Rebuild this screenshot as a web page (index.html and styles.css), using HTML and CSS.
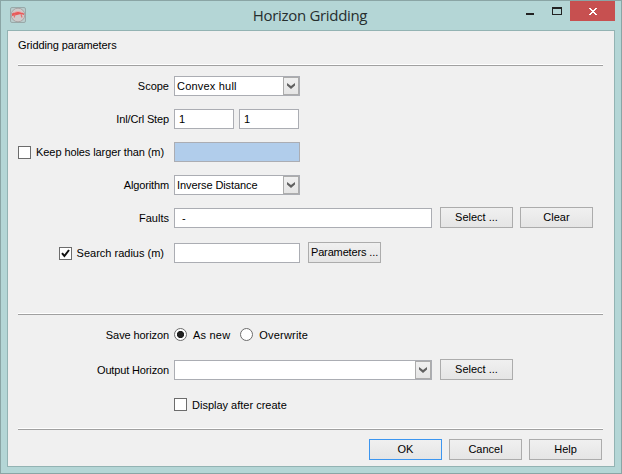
FILE: index.html
```html
<!DOCTYPE html>
<html lang="en">
<head>
<meta charset="utf-8">
<title>Horizon Gridding</title>
<link rel="stylesheet" href="styles.css">
</head>
<body>
<div class="window">
  <header class="titlebar">
    <svg class="app-icon" width="16" height="16" viewBox="0 0 16 16">
      <rect x=".5" y=".5" width="15" height="15" rx="1.5" fill="#b9cccc" stroke="#98a9a9"/>
      <circle cx="8" cy="8" r="6.8" fill="#cfcaca" stroke="#a39b9b" stroke-width=".8"/>
      <path d="M2 6.5Q8 2.5 14 6.5V8L11 7L7 8L2 9Z" fill="#e85a5a"/>
      <path d="M5 7L4.2 10.5M11 7L12 10.5" fill="none" stroke="#e87070" stroke-width="1.2"/>
      <path d="M4 5.5Q8 3.2 12 5.5" fill="none" stroke="#efb0b0" stroke-width=".8"/>
    </svg>
    <h1 class="title">Horizon Gridding</h1>
    <div class="window-buttons">
      <svg class="minimize" width="8" height="2"><rect width="8" height="2" fill="#222"/></svg>
      <svg class="maximize" width="10" height="8" shape-rendering="crispEdges"><path d="M0 0H10V8H0ZM1 2V7H9V2Z" fill="#222" fill-rule="evenodd"/></svg>
      <div class="close"><svg width="8" height="7" shape-rendering="crispEdges"><path d="M0 0h2v1h1v1h2V1h1V0h2v1H7v1H6v1H5v1h1v1h1v1h1v1H6V6H5V5H3v1H2v1H0V6h1V5h1V4h1V3H2V2H1V1H0z" fill="#fff"/></svg></div>
    </div>
  </header>
  <main class="panel">
    <h2 class="heading tight">Gridding parameters</h2>
    <hr class="rule">
    <section class="params">
      <div class="row">
        <div class="label"><span>Scope</span></div>
        <div class="combo medium"><span class="loose">Convex hull</span><i class="arrow"><svg width="8" height="6"><path d="M0 0L4 3L8 0V2.5L4 6L0 2.5Z" fill="#606060"/></svg></i></div>
      </div>
      <div class="row">
        <div class="label tighter"><span>Inl/Crl Step</span></div>
        <div class="field small">1</div><div class="field small second">1</div>
      </div>
      <div class="row">
        <div class="label check-label"><i class="checkbox"></i><span class="tight">Keep holes larger than (m)</span></div>
        <div class="field medium disabled"></div>
      </div>
      <div class="row">
        <div class="label tighter"><span>Algorithm</span></div>
        <div class="combo medium"><span class="tight">Inverse Distance</span><i class="arrow"><svg width="8" height="6"><path d="M0 0L4 3L8 0V2.5L4 6L0 2.5Z" fill="#606060"/></svg></i></div>
      </div>
      <div class="row">
        <div class="label"><span>Faults</span></div>
        <div class="field large">&nbsp;-</div>
        <div class="button">Select ...</div><div class="button next">Clear</div>
      </div>
      <div class="row search">
        <div class="label check-label"><i class="checkbox"><svg width="11" height="11"><path d="M2 5.2L4.4 8L9 2" fill="none" stroke="#111" stroke-width="2"/></svg></i><span>Search radius (m)</span></div>
        <div class="field medium"></div>
        <div class="button tighter">Parameters ...</div>
      </div>
    </section>
    <hr class="rule">
    <section class="output">
      <div class="row save">
        <div class="label tight"><span>Save horizon</span></div>
        <i class="radio selected"></i><span class="choice loose">As new</span>
        <i class="radio other"></i><span class="choice loose">Overwrite</span>
      </div>
      <div class="row">
        <div class="label tighter"><span>Output Horizon</span></div>
        <div class="combo large"><span></span><i class="arrow"><svg width="8" height="6"><path d="M0 0L4 3L8 0V2.5L4 6L0 2.5Z" fill="#606060"/></svg></i></div>
        <div class="button">Select ...</div>
      </div>
      <div class="row display">
        <div class="label"></div>
        <i class="checkbox"></i><span class="choice">Display after create</span>
      </div>
    </section>
    <hr class="rule">
    <footer class="actions">
      <div class="button default">OK</div><div class="button">Cancel</div><div class="button">Help</div>
    </footer>
  </main>
</div>
</body>
</html>
```
FILE: styles.css
```css
* { box-sizing: border-box; }
body { margin: 0; font: 11px/13px "Liberation Sans", Arial, sans-serif; color: #000; }
i { font-style: normal; }
svg { display: block; }
.window { width: 622px; height: 474px; padding: 0 6px 6px; border: 1px solid #8aa5a5; background: #b4d6d6; }
.titlebar { height: 29px; display: grid; grid-template-columns: 108px 1fr 108px; align-items: start; }
.app-icon { margin: 6px 0 0 3px; }
.title { margin: 3px 2px 0 0; font: 400 15px/22px "Open Sans", "Noto Sans", sans-serif; letter-spacing: -.32px; color: #262e2e; text-align: center; white-space: nowrap; }
.window-buttons { display: flex; }
.minimize { margin: 12px 0 0 19px; }
.maximize { margin: 6px 0 0 18px; flex: none; }
.close { width: 45px; height: 20px; margin-left: 8px; flex: none; display: flex; justify-content: center; padding-top: 7px; background: #c75050; }
.panel { height: 437px; padding: 0 10px; border: 1px solid #93b3b3; background: #f0f0f0; }
.heading { height: 33px; margin: 0; padding-top: 8px; font: inherit; }
.tight { letter-spacing: -.09px; }
.tighter { letter-spacing: -.14px; }
.loose { letter-spacing: .2px; }
.rule { width: 585px; height: 2px; margin: 0; border: 0; border-top: 1px solid #fff; background: #a0a0a0; }
.params { height: 247px; padding-top: 9px; }
.output { height: 113px; padding-top: 9px; }
.row { height: 21px; margin-bottom: 12px; display: flex; align-items: flex-end; white-space: nowrap; }
.row.search { margin-top: 14px; }
.row.save { align-items: center; margin-bottom: 14px; }
.row.display { align-items: center; margin-top: 14px; }
.label { width: 151px; height: 20px; margin-right: 5px; display: flex; align-items: center; justify-content: flex-end; }
.check-label { padding-right: 5px; }
.checkbox { width: 13px; height: 13px; flex: none; border: 1px solid #6c6c6c; background: #fff; }
.label .checkbox { margin-right: 5px; }
.field, .combo { height: 20px; border: 1px solid #abadb3; background: #fff; line-height: 18px; }
.field { padding-left: 4px; }
.small { width: 60px; }
.medium { width: 126px; }
.large { width: 258px; }
.second { margin-left: 5px; }
.disabled { background: #b1cdeb; }
.combo { padding-left: 2px; display: flex; justify-content: space-between; }
.arrow { width: 16px; height: 18px; display: flex; align-items: center; justify-content: center; border: 1px solid #acacac; background: linear-gradient(#f0f0f0, #e5e5e5); }
.button { width: 73px; height: 21px; margin-left: 8px; border: 1px solid #acacac; background: linear-gradient(#f0f0f0, #e5e5e5); line-height: 18px; text-align: center; white-space: nowrap; }
.button.next { margin-left: 7px; }
.button.default { border-color: #3c96f0; }
.radio { width: 13px; height: 13px; border: 1px solid #6c6c6c; border-radius: 50%; background: #fff; }
.radio.selected { background: radial-gradient(circle, #222 0 3.2px, #fff 4px); }
.radio.other { margin-left: 10px; }
.choice { margin-left: 6px; padding-top: 2px; }
.save .label { padding-top: 2px; }
.row.display .choice { margin-left: 5px; }
.actions { padding: 9px 2px 0 0; display: flex; justify-content: flex-end; }
.actions .button:not(:first-child) { margin-left: 7px; }
```
